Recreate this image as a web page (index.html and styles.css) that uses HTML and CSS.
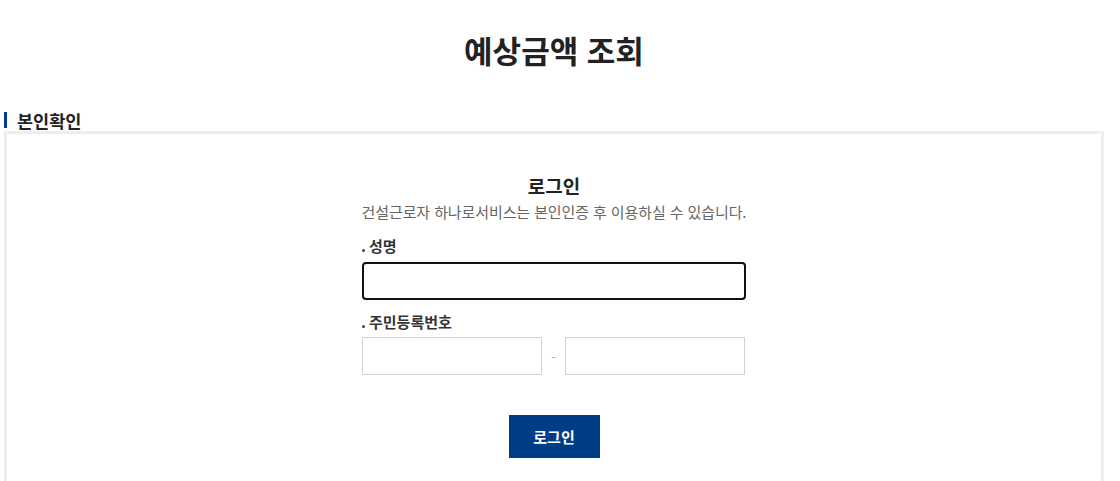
FILE: index.html
```html
<!DOCTYPE html>
<html lang="ko">
<head>
<meta charset="utf-8">
<title>예상금액 조회</title>
<link rel="stylesheet" href="styles.css">
</head>
<body>
<div class="page">
  <h1 class="page-title">예상금액 조회</h1>
  <h2 class="section-title">본인확인</h2>
  <div class="box">
    <div class="login">
      <h3 class="login-title">로그인</h3>
      <p class="login-desc">건설근로자 하나로서비스는 본인인증 후 이용하실 수 있습니다.</p>
      <label class="field-label">성명</label>
      <input class="input input-name" type="text">
      <label class="field-label field-label-2">주민등록번호</label>
      <div class="jumin">
        <input class="input input-jumin" type="text">
        <span class="dash">-</span>
        <input class="input input-jumin" type="password">
      </div>
      <div class="actions">
        <button class="btn-login" type="button">로그인</button>
      </div>
    </div>
  </div>
</div>
</body>
</html>
```

FILE: styles.css
```css
* { box-sizing: border-box; }
html, body {
  margin: 0;
  padding: 0;
  background: #fff;
  font-family: "Noto Sans CJK KR", "Noto Sans", sans-serif;
  color: #222;
}
.page {
  width: 1100px;
  margin-left: 4px;
}
.page-title {
  margin: 0;
  padding-top: 28px;
  text-align: center;
  font-size: 31px;
  line-height: 44px;
  font-weight: 700;
  color: #222;
}
.section-title {
  margin: 38px 0 0;
  padding-left: 13px;
  position: relative;
  font-size: 17.5px;
  line-height: 21px;
  font-weight: 700;
  color: #222;
}
.section-title::before {
  content: "";
  position: absolute;
  left: 0;
  top: 2px;
  width: 3px;
  height: 16px;
  background: #003d87;
}
.box {
  border: 3px solid #eeeeee;
  height: 360px;
  padding-top: 38px;
}
.login {
  width: 384px;
  margin: 0 auto;
  display: flex;
  flex-direction: column;
}
.login-title {
  margin: 0;
  text-align: center;
  font-size: 19px;
  line-height: 28px;
  font-weight: 700;
  color: #222;
}
.login-desc {
  margin: 2px -10px 0;
  text-align: center;
  font-size: 15px;
  line-height: 20px;
  color: #666;
  white-space: nowrap;
  letter-spacing: -0.1px;
}
.field-label {
  margin-top: 12px;
  font-size: 15px;
  line-height: 24px;
  font-weight: 700;
  color: #333;
  display: flex;
  align-items: center;
}
.field-label::before {
  content: "";
  width: 3px;
  height: 3px;
  background: #444;
  border-radius: 50%;
  margin-right: 4px;
  margin-top: 9px;
}
.field-label-2 { margin-top: 10px; }
.input {
  display: block;
  height: 38px;
  border: 1px solid #d2d2d2;
  background: #fff;
  margin: 0;
  font-family: inherit;
  font-size: 14px;
}
.input-name {
  width: 384px;
  margin-top: 4px;
  border: 2px solid #111;
  border-radius: 4px;
}
.jumin {
  margin-top: 3px;
  display: flex;
  align-items: center;
  justify-content: space-between;
  padding-right: 1px;
}
.input-jumin { width: 180px; }
.dash {
  color: #aaa;
  font-size: 13px;
}
.actions {
  margin-top: 40px;
  display: flex;
  justify-content: center;
}
.btn-login {
  width: 91px;
  height: 43px;
  border: 0;
  background: #003d87;
  color: #fff;
  font-family: inherit;
  font-size: 15px;
  font-weight: 700;
  padding: 0;
}
```
